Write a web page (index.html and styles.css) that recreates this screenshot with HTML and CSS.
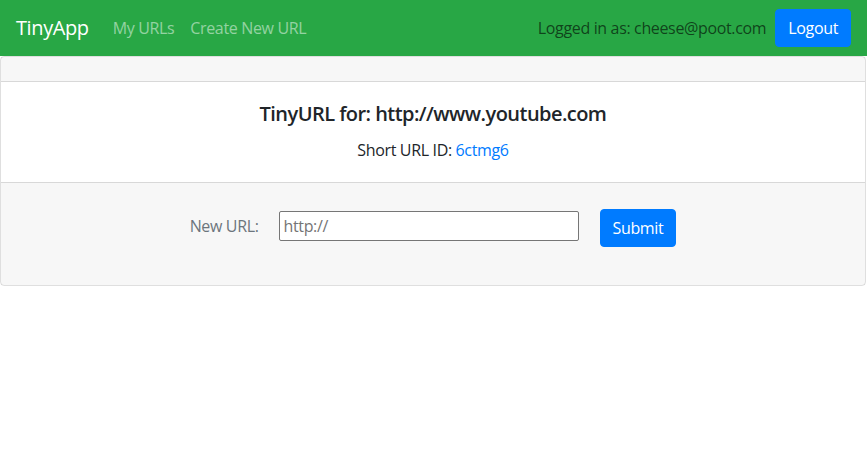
FILE: index.html
```html
<!DOCTYPE html>
<html lang="en">
<head>
<meta charset="utf-8">
<title>TinyApp</title>
<link rel="stylesheet" href="styles.css">
</head>
<body>
<nav class="navbar">
  <a class="brand" href="#">TinyApp</a>
  <div class="nav-links">
    <a class="nav-link" href="#">My URLs</a>
    <a class="nav-link" href="#">Create New URL</a>
  </div>
  <div class="nav-right">
    <span class="nav-text">Logged in as: cheese@poot.com</span>
    <button class="btn btn-primary" type="button">Logout</button>
  </div>
</nav>
<main class="card">
  <div class="card-header"></div>
  <div class="card-body">
    <h5 class="card-title">TinyURL for: http://www.youtube.com</h5>
    <p class="card-text">Short URL ID: <a class="link" href="#">6ctmg6</a></p>
  </div>
  <div class="card-footer">
    <form class="url-form">
      <label class="form-label" for="longURL">New URL:</label>
      <input class="url-input" id="longURL" type="text" placeholder="http://">
      <button class="btn btn-primary btn-submit" type="submit">Submit</button>
    </form>
  </div>
</main>
</body>
</html>
```
FILE: styles.css
```css
* { box-sizing: border-box; }
body {
  margin: 0;
  font-family: "Open Sans", "Noto Sans", sans-serif;
  font-size: 16px;
  line-height: 1.5;
  letter-spacing: -0.35px;
  color: #212529;
  background: #fff;
}
a { text-decoration: none; }
.navbar {
  display: flex;
  align-items: center;
  background: #28a745;
  padding: 8px 16px;
  height: 56px;
}
.brand {
  font-size: 20px;
  line-height: 30px;
  color: #fff;
  margin-right: 16px;
  padding: 5px 0;
  letter-spacing: -0.4px;
}
.nav-links { display: flex; }
.nav-link {
  color: rgba(255, 255, 255, 0.5);
  padding: 8px;
}
.nav-right {
  margin-left: auto;
  display: flex;
  align-items: center;
}
.nav-text {
  color: rgba(0, 0, 0, 0.62);
  margin-right: 9px;
}
.btn {
  font-family: inherit;
  font-size: 16px;
  line-height: 24px;
  letter-spacing: -0.35px;
  padding: 6px 12px;
  border: 1px solid transparent;
  border-radius: 4px;
  cursor: pointer;
}
.btn-primary {
  background: #007bff;
  border-color: #007bff;
  color: #fff;
}
.card {
  display: flex;
  flex-direction: column;
  border: 1px solid rgba(0, 0, 0, 0.125);
  border-radius: 4px;
  margin-right: 1px;
}
.card-header {
  padding: 12px 20px;
  background: rgba(0, 0, 0, 0.03);
  border-bottom: 1px solid rgba(0, 0, 0, 0.125);
  min-height: 25px;
}
.card-body {
  padding: 20px;
  text-align: center;
}
.card-title {
  margin: 0 0 12px;
  font-size: 20px;
  font-weight: 600;
  line-height: 24px;
  letter-spacing: -0.55px;
}
.card-text { margin: 0; }
.link { color: #007bff; }
.card-footer {
  padding: 12px 20px;
  background: rgba(0, 0, 0, 0.03);
  border-top: 1px solid rgba(0, 0, 0, 0.125);
}
.url-form {
  display: flex;
  justify-content: center;
  align-items: center;
  height: 62px;
  margin-bottom: 16px;
}
.form-label { color: #6c757d; margin-right: 20px; }
.url-input {
  width: 300px;
  height: 30px;
  padding: 1px 4px;
  border: 1px solid #767676;
  border-radius: 2px;
  font-family: inherit;
  font-size: 16px;
  letter-spacing: -0.35px;
  color: #212529;
  background: #fff;
}
.url-input::placeholder { color: #757575; }
.btn-submit { margin-left: 21px; margin-top: 4px; }
```
